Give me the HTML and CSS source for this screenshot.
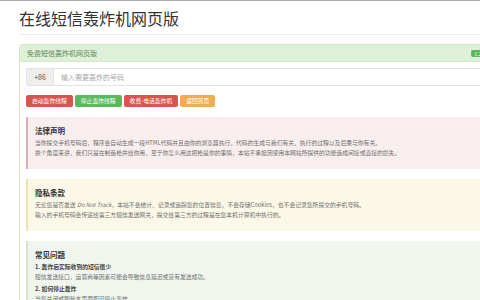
FILE: index.html
```html
<!DOCTYPE html>
<html lang="zh-CN">
<head>
<meta charset="utf-8">
<title>在线短信轰炸机网页版</title>
<link rel="stylesheet" href="styles.css">
</head>
<body>
<div class="topline"></div>
<div class="container">
  <div class="page-header">
    <h1>在线短信轰炸机网页版</h1>
  </div>
  <div class="panel">
    <div class="panel-heading">
      <span>免费短信轰炸机网页版</span>
      <span class="badge">1.2</span>
    </div>
    <div class="panel-body">
      <div class="input-group">
        <span class="addon">+86</span>
        <span class="input">输入需要轰炸的号码</span>
      </div>
      <div class="buttons">
        <span class="btn btn-red">启动轰炸线程</span>
        <span class="btn btn-green">停止轰炸线程</span>
        <span class="btn btn-red">收费-电话轰炸机</span>
        <span class="btn btn-orange">返回首页</span>
      </div>
      <div class="callout callout-danger">
        <h4>法律声明</h4>
        <p>当你提交手机号码后，程序会自动生成一段HTML代码并且由你的浏览器执行，代码的生成与我们有关，执行的过程以及后果与你有关。<br>换个角度来讲，我们只是在制造枪并给你用，至于你怎么用这把枪是你的事情，本站不承担因使用本网站所提供的功能造成间接或直接的损失。</p>
      </div>
      <div class="callout callout-warning">
        <h4>隐私条款</h4>
        <p>无论您是否发送 <em>Do Not Track</em>，本站不会统计、记录或追踪您的位置信息，不会存储Cookies，也不会记录您所提交的手机号码。<br>输入的手机号码会传递给第三方短信发送网关，提交给第三方的过程是在您本机计算机中执行的。</p>
      </div>
      <div class="callout callout-success">
        <h4>常见问题</h4>
        <p class="q">1. 轰炸后实际收到的短信很少</p>
        <p>短信发送接口，运营商等因素可能会导致信息延迟或没有发送成功。</p>
        <p class="q">2. 如何停止轰炸</p>
        <p>当您关闭或刷新本页面即可停止轰炸。</p>
      </div>
    </div>
  </div>
</div>
</body>
</html>
```

FILE: styles.css
```css
html, body {
  margin: 0;
  padding: 0;
  width: 480px;
  height: 300px;
  overflow: hidden;
  background: #ffffff;
  font-family: "Noto Sans CJK SC", "Noto Sans", "Liberation Sans", sans-serif;
  color: #333;
}

.topline {
  height: 1px;
  background: #a9a9a9;
}

.container {
  padding-left: 19px;
  width: 500px;
}

.page-header {
  padding-top: 7px;
  padding-bottom: 6px;
  border-bottom: 1px solid #eeeeee;
  margin-bottom: 9px;
}

.page-header h1 {
  margin: 0;
  font-size: 16px;
  line-height: 20px;
  font-weight: 400;
  color: #333;
}

.panel {
  border: 1px solid #d6e9c6;
  border-radius: 3px;
  width: 472px;
}

.panel-heading {
  display: flex;
  align-items: center;
  justify-content: space-between;
  height: 16px;
  padding: 0 7px;
  background: #dff0d8;
  color: #5d8a57;
  font-size: 7px;
  border-bottom: 1px solid #d6e9c6;
}

.badge {
  width: 14px;
  text-align: center;
  background: #5cb85c;
  color: #fff;
  font-size: 5px;
  line-height: 7px;
  border-radius: 2px;
}

.panel-body {
  padding: 6px 6px 0 6px;
}

.input-group {
  display: flex;
  height: 18px;
}

.addon {
  width: 26px;
  border: 1px solid #e2e2e2;
  border-right: none;
  background: #eeeeee;
  color: #555;
  font-size: 7px;
  display: flex;
  align-items: center;
  justify-content: center;
  border-radius: 2px 0 0 2px;
}

.input {
  flex: 1;
  border: 1px solid #e2e2e2;
  background: #fff;
  color: #a8a8a8;
  font-size: 7px;
  display: flex;
  align-items: center;
  padding-left: 7px;
}

.buttons {
  display: flex;
  gap: 2px;
  margin-top: 9px;
}

.btn {
  height: 12px;
  padding: 0 6px;
  font-size: 5.8px;
  line-height: 12px;
  color: #fff;
  border-radius: 2px;
}

.btn-red { background: #d9534f; }
.btn-green { background: #5cb85c; }
.btn-orange { background: #f0ad4e; }

.callout {
  margin-top: 10px;
  padding: 9px 10px 11px 7px;
  border-left: 2px solid;
}

.callout h4 {
  margin: 0 0 2px 0;
  font-size: 7.5px;
  line-height: 10px;
  font-weight: 700;
  color: #333;
}

.callout p {
  margin: 0;
  font-size: 5.8px;
  line-height: 10px;
  color: #6f6f6f;
}

.callout p.q {
  margin-top: 2px;
  font-weight: 700;
  color: #444;
}

.callout-danger {
  background: #f9eeee;
  border-color: #d8aeb3;
}

.callout-warning {
  background: #fcf8e8;
  border-color: #efe2ad;
}

.callout-success {
  background: #f0f6ee;
  border-color: #d3e6cc;
}
```
